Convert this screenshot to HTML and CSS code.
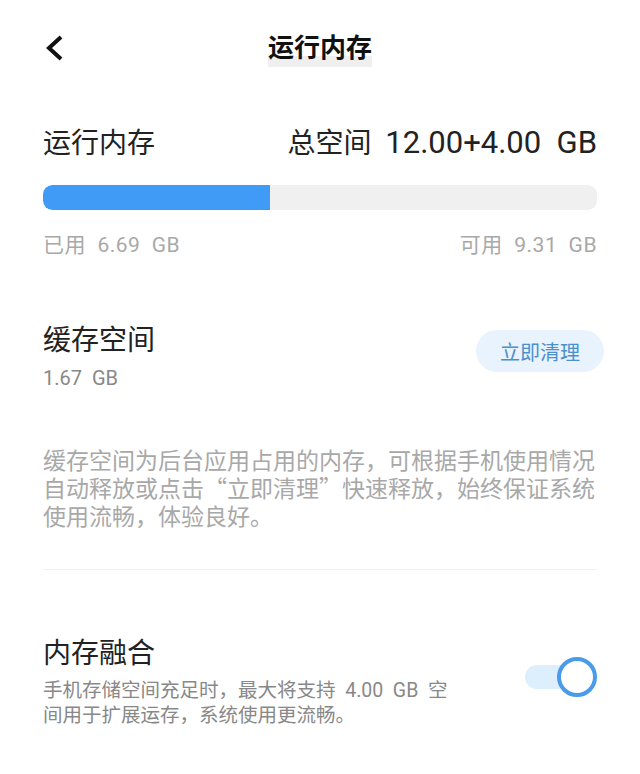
FILE: index.html
```html
<!DOCTYPE html>
<html lang="zh">
<head>
<meta charset="utf-8">
<link rel="stylesheet" href="styles.css">
</head>
<body>
<div class="page">
  <header class="nav">
    <svg class="back" width="22" height="28" viewBox="0 0 22 28"><path d="M18 3 L6 14 L18 25" fill="none" stroke="#111" stroke-width="4"/></svg>
    <h1 class="title"><span>运行内存</span></h1>
  </header>

  <section class="mem">
    <div class="row">
      <div class="h2">运行内存</div>
      <div class="h2 total">总空间&nbsp; <span class="num">12.00+4.00&nbsp; GB</span></div>
    </div>
    <div class="bar"><div class="fill" style="width:41%"></div></div>
    <div class="row labels">
      <span>已用&nbsp; 6.69&nbsp; GB</span>
      <span>可用&nbsp; 9.31&nbsp; GB</span>
    </div>
  </section>

  <section class="cache">
    <div class="cache-info">
      <div class="h2">缓存空间</div>
      <div class="sub">1.67&nbsp; GB</div>
    </div>
    <button class="clean">立即清理</button>
  </section>

  <p class="desc">缓存空间为后台应用占用的内存，可根据手机使用情况自动释放或点击“立即清理”快速释放，始终保证系统使用流畅，体验良好。</p>

  <hr class="divider">

  <section class="fuse">
    <div class="fuse-info">
      <div class="h2">内存融合</div>
      <div class="sub2">手机存储空间充足时，最大将支持&nbsp; 4.00&nbsp; GB&nbsp; 空间用于扩展运存，系统使用更流畅。</div>
    </div>
    <div class="toggle"><div class="knob"></div></div>
  </section>
</div>
</body>
</html>
```

FILE: styles.css
```css
* { box-sizing: border-box; }
html, body { margin: 0; padding: 0; background: #fff; }
body { font-family: Roboto, "Noto Sans CJK SC", "Noto Sans", sans-serif; color: #222; }
.page { padding: 0 43px; width: 640px; }
.nav { position: relative; height: 96px; display: flex; align-items: center; justify-content: center; }
.back { position: absolute; left: 0; top: 34px; }
.title { margin: 0; font-family: "Noto Sans CJK SC", sans-serif; font-size: 26px; font-weight: 700; color: #111; line-height: 1; margin-top: 0; }
.title span { display: inline-block; padding: 4px 0 8px; background: linear-gradient(to bottom, transparent 72%, #efefef 72%); }
.mem { padding-top: 28px; }
.row { display: flex; justify-content: space-between; align-items: center; }
.h2 { font-size: 28px; line-height: 38px; color: #222; }
.total { color: #222; }
.num { font-size: 31px; }
.bar { margin-top: 22px; height: 25px; background: #f0f0f0; border-radius: 9px; overflow: hidden; }
.fill { height: 100%; background: #3f9bf6; border-radius: 9px 0 0 9px; }
.labels { margin-top: 21px; font-size: 21px; letter-spacing: 0.5px; color: #a8a8a8; line-height: 28px; }
.cache { display: flex; justify-content: space-between; align-items: center; margin-top: 63px; margin-right: -7px; }
.sub { font-size: 20px; color: #888; line-height: 28px; margin-top: 4px; }
.clean { border: none; background: #e9f3fd; color: #4b8fcc; font-family: "Noto Sans CJK SC", sans-serif; font-size: 20px; height: 42px; width: 128px; padding: 0; border-radius: 21px; margin-top: -12px; }
.desc { margin: 53px 0 0; font-family: "Noto Sans CJK SC", sans-serif; font-size: 23px; line-height: 28px; color: #a8a8a8; }
.divider { border: none; border-top: 1px solid #f0f0f0; margin: 40px 0 0; }
.fuse { display: flex; justify-content: space-between; align-items: center; margin-top: 65px; }
.fuse-info { width: 416px; }
.sub2 { font-size: 19.5px; line-height: 25px; color: #888; margin-top: 5px; }
.toggle { position: relative; width: 54px; height: 24px; background: #ddeefc; border-radius: 12px; margin-right: 18px; margin-top: -10px; }
.knob { position: absolute; right: -18px; top: -8px; width: 40px; height: 40px; border-radius: 50%; background: #fff; border: 4px solid #4a9be9; }
```
